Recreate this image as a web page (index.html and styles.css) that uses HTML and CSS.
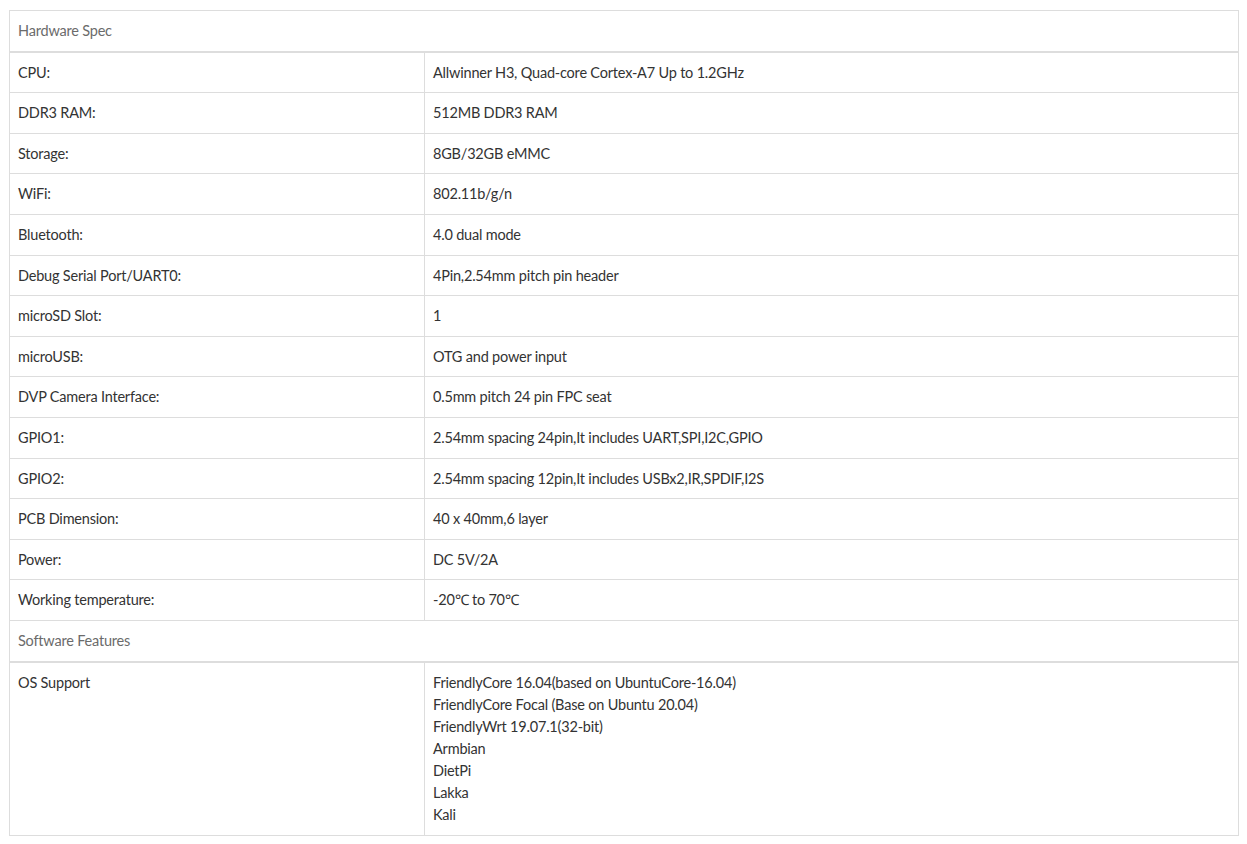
FILE: index.html
```html
<!DOCTYPE html>
<html>
<head>
<meta charset="utf-8">
<link rel="stylesheet" href="styles.css">
</head>
<body>
<div class="wrap">
<table class="spec">
<colgroup><col class="c1"><col class="c2"></colgroup>
<thead><tr><th colspan="2">Hardware Spec</th></tr></thead>
<tbody>
<tr><td>CPU:</td><td>Allwinner H3, Quad-core Cortex-A7 Up to 1.2GHz</td></tr>
<tr><td>DDR3 RAM:</td><td>512MB DDR3 RAM</td></tr>
<tr><td>Storage:</td><td>8GB/32GB eMMC</td></tr>
<tr><td>WiFi:</td><td>802.11b/g/n</td></tr>
<tr><td>Bluetooth:</td><td>4.0 dual mode</td></tr>
<tr><td>Debug Serial Port/UART0:</td><td>4Pin,2.54mm pitch pin header</td></tr>
<tr><td>microSD Slot:</td><td>1</td></tr>
<tr><td>microUSB:</td><td>OTG and power input</td></tr>
<tr><td>DVP Camera Interface:</td><td>0.5mm pitch 24 pin FPC seat</td></tr>
<tr><td>GPIO1:</td><td>2.54mm spacing 24pin,It includes UART,SPI,I2C,GPIO</td></tr>
<tr><td>GPIO2:</td><td>2.54mm spacing 12pin,It includes USBx2,IR,SPDIF,I2S</td></tr>
<tr><td>PCB Dimension:</td><td>40 x 40mm,6 layer</td></tr>
<tr><td>Power:</td><td>DC 5V/2A</td></tr>
<tr><td>Working temperature:</td><td>-20℃ to 70℃</td></tr>
</tbody>
<thead><tr><th colspan="2">Software Features</th></tr></thead>
<tbody>
<tr class="os"><td>OS Support</td><td>
<div>FriendlyCore 16.04(based on UbuntuCore-16.04)</div>
<div>FriendlyCore Focal (Base on Ubuntu 20.04)</div>
<div>FriendlyWrt 19.07.1(32-bit)</div>
<div>Armbian</div>
<div>DietPi</div>
<div>Lakka</div>
<div>Kali</div>
</td></tr>
</tbody>
</table>
</div>
</body>
</html>
```

FILE: styles.css
```css
html, body {
  margin: 0;
  padding: 0;
  background: #fff;
}
.wrap {
  padding: 10px 9px;
}
.spec {
  width: 1230px;
  border-collapse: collapse;
  table-layout: fixed;
  font-family: Lato, "Liberation Sans", sans-serif;
  font-size: 14.5px;
  letter-spacing: -0.2px;
  color: #333;
}
.spec .c1 { width: 415px; }
.spec th, .spec td {
  border: 1px solid #ddd;
  padding: 9px 8px;
  line-height: 21.6px;
  text-align: left;
  vertical-align: top;
}
.spec th {
  font-weight: normal;
  color: #6b6b6b;
  border-bottom: 2px solid #ddd;
}
.spec .os td {
  line-height: 22px;
  padding-top: 9px;
  padding-bottom: 9px;
}
```
